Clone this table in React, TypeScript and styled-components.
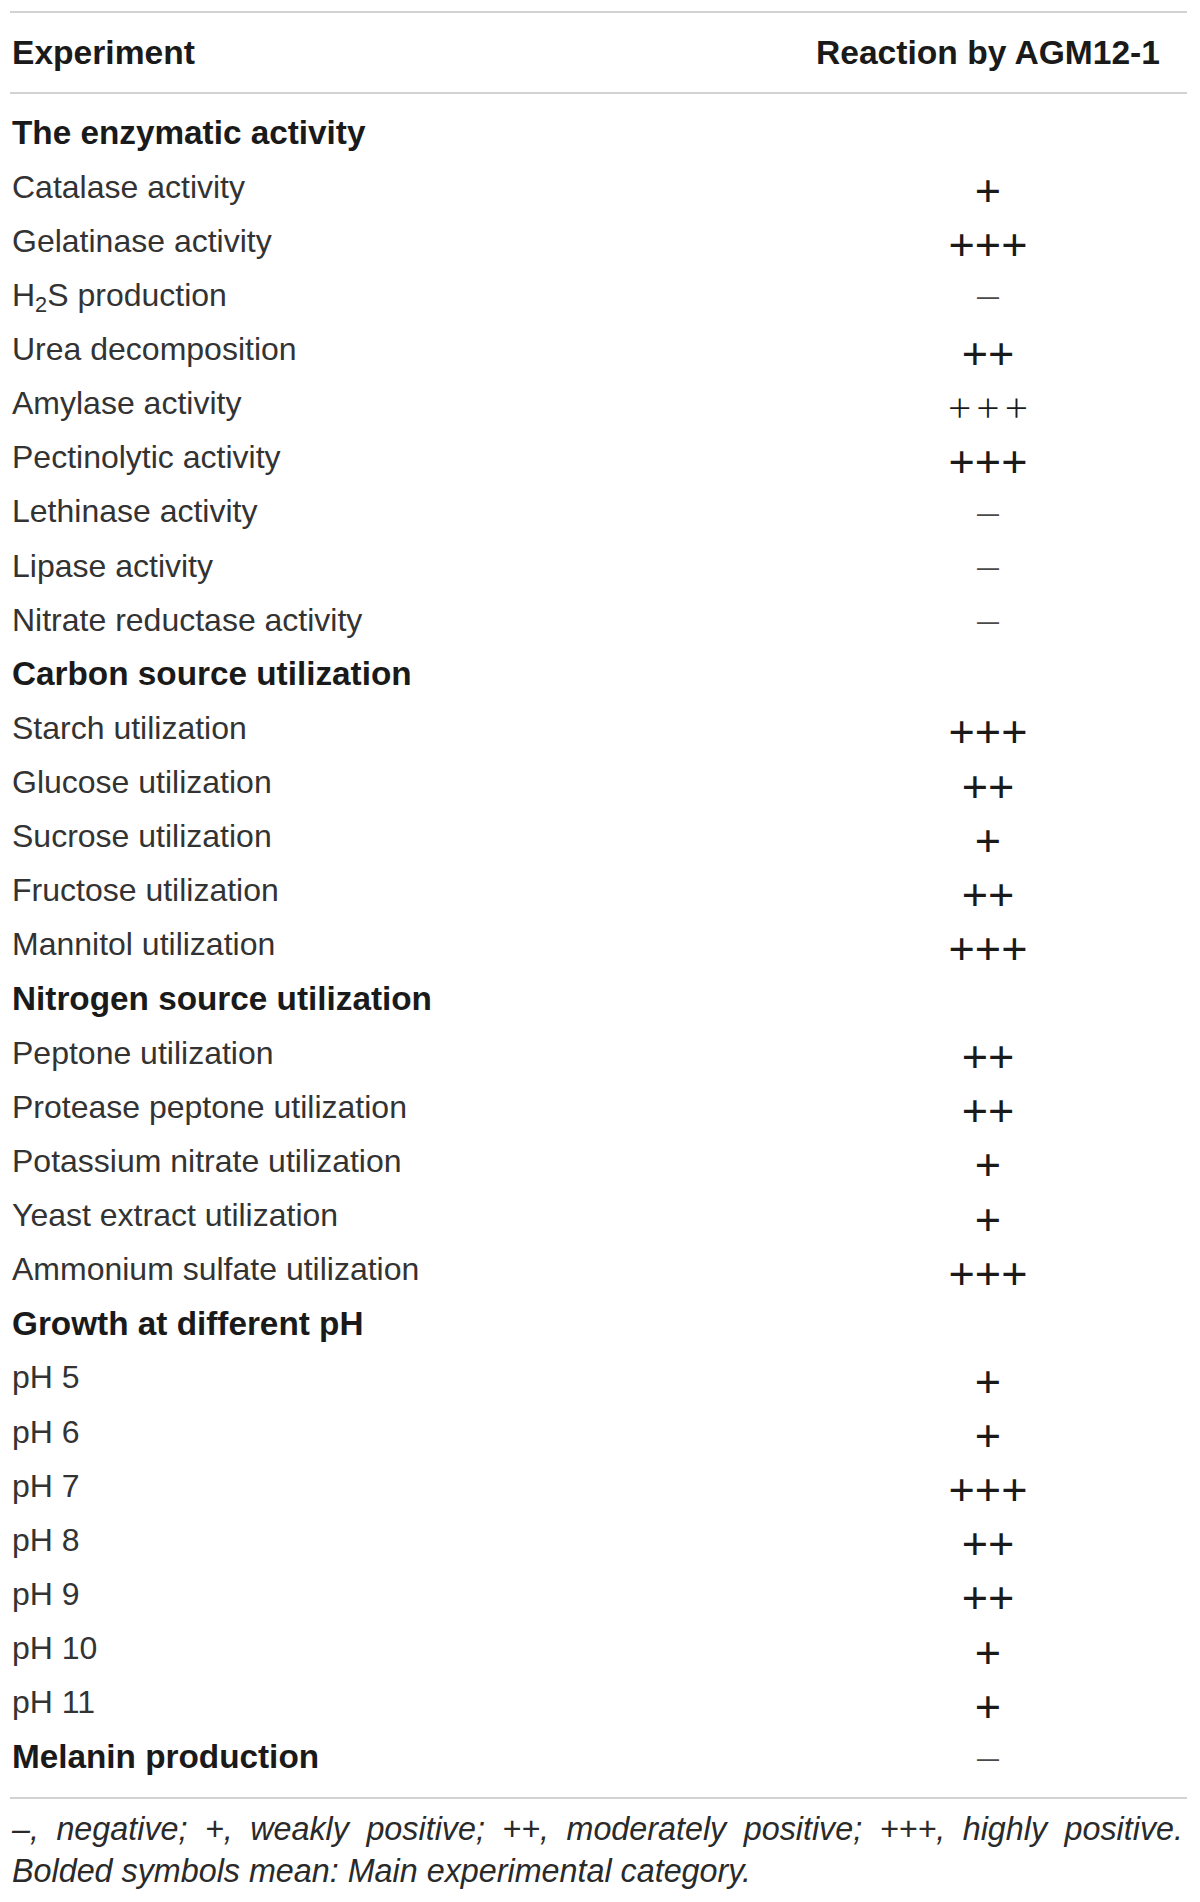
import styled, { createGlobalStyle } from "styled-components";

type Level = "bold" | "thin" | "neg";

type RowI = {
  label: string;
  category?: boolean;
  value?: string;
  level?: Level;
};

const rows: RowI[] = [
  { label: "The enzymatic activity", category: true },
  { label: "Catalase activity", value: "+", level: "bold" },
  { label: "Gelatinase activity", value: "+++", level: "bold" },
  { label: "H2S production", value: "–", level: "neg" },
  { label: "Urea decomposition", value: "++", level: "bold" },
  { label: "Amylase activity", value: "+++", level: "thin" },
  { label: "Pectinolytic activity", value: "+++", level: "bold" },
  { label: "Lethinase activity", value: "–", level: "neg" },
  { label: "Lipase activity", value: "–", level: "neg" },
  { label: "Nitrate reductase activity", value: "–", level: "neg" },
  { label: "Carbon source utilization", category: true },
  { label: "Starch utilization", value: "+++", level: "bold" },
  { label: "Glucose utilization", value: "++", level: "bold" },
  { label: "Sucrose utilization", value: "+", level: "bold" },
  { label: "Fructose utilization", value: "++", level: "bold" },
  { label: "Mannitol utilization", value: "+++", level: "bold" },
  { label: "Nitrogen source utilization", category: true },
  { label: "Peptone utilization", value: "++", level: "bold" },
  { label: "Protease peptone utilization", value: "++", level: "bold" },
  { label: "Potassium nitrate utilization", value: "+", level: "bold" },
  { label: "Yeast extract utilization", value: "+", level: "bold" },
  { label: "Ammonium sulfate utilization", value: "+++", level: "bold" },
  { label: "Growth at different pH", category: true },
  { label: "pH 5", value: "+", level: "bold" },
  { label: "pH 6", value: "+", level: "bold" },
  { label: "pH 7", value: "+++", level: "bold" },
  { label: "pH 8", value: "++", level: "bold" },
  { label: "pH 9", value: "++", level: "bold" },
  { label: "pH 10", value: "+", level: "bold" },
  { label: "pH 11", value: "+", level: "bold" },
  { label: "Melanin production", category: true, value: "–", level: "neg" },
];

// chemical formulas like H2S get the digit as a subscript
const renderLabel = (label: string) => {
  const m = label.match(/^([A-Z][a-z]?)(\d)(\S*)(.*)$/);
  if (!m) return label;
  return (
    <>
      {m[1]}
      <Sub>{m[2]}</Sub>
      {m[3]}
      {m[4]}
    </>
  );
};

const App = () => {
  return (
    <>
      <GlobalStyle />
      <Page>
        <Table>
          <HeadRow>
            <HeadCell>Experiment</HeadCell>
            <HeadCell $center>Reaction by AGM12-1</HeadCell>
          </HeadRow>
          <Body>
            {rows.map((row, i) => (
              <Row key={i}>
                <Label $category={row.category}>{renderLabel(row.label)}</Label>
                {row.value && <Reaction $level={row.level}>{row.value}</Reaction>}
              </Row>
            ))}
          </Body>
        </Table>
        <Footnote>
          <FootLine $justify>
            –, negative; +, weakly positive; ++, moderately positive; +++, highly positive.
          </FootLine>
          <FootLine>Bolded symbols mean: Main experimental category.</FootLine>
        </Footnote>
      </Page>
    </>
  );
};

const GlobalStyle = createGlobalStyle`
  body {
    margin: 0;
    background: #fff;
    font-family: "Liberation Sans", Arial, sans-serif;
    color: #222;
  }
`;

const Page = styled.div`
  width: 1177px;
  padding: 11px 0 0 10px;
`;

const Table = styled.div`
  border-top: 2px solid #d2d2d2;
  border-bottom: 2px solid #d2d2d2;
`;

const HeadRow = styled.div`
  display: grid;
  grid-template-columns: 1fr 398px;
  align-items: center;
  height: 79px;
  border-bottom: 2px solid #d2d2d2;
`;

const HeadCell = styled.div<{ $center?: boolean }>`
  font-size: 33.6px;
  font-weight: 700;
  color: #1a1a1a;
  padding-left: ${(p) => (p.$center ? "0" : "2px")};
  text-align: ${(p) => (p.$center ? "center" : "left")};
`;

const Body = styled.div`
  padding: 12px 0 13px;
`;

const Row = styled.div`
  display: grid;
  grid-template-columns: 1fr 398px;
  align-items: center;
  height: 54.13px;
`;

const Label = styled.div<{ $category?: boolean }>`
  padding-left: 2px;
  white-space: nowrap;
  font-size: ${(p) => (p.$category ? "33.3px" : "32px")};
  font-weight: ${(p) => (p.$category ? 700 : 400)};
  color: ${(p) => (p.$category ? "#1a1a1a" : "#333")};
`;

const Sub = styled.sub`
  font-size: 0.68em;
  vertical-align: -0.28em;
  line-height: 0;
`;

const Reaction = styled.div<{ $level?: Level }>`
  grid-column: 2;
  text-align: center;
  line-height: 1;
  padding-top: ${(p) => (p.$level === "bold" ? "7px" : "2px")};
  font-family: ${(p) =>
    p.$level === "bold" ? `"Liberation Sans", Arial, sans-serif` : `Inter, "DejaVu Sans", sans-serif`};
  font-size: ${(p) => (p.$level === "bold" ? "45px" : "44px")};
  font-weight: ${(p) => (p.$level === "bold" ? 400 : 200)};
  color: ${(p) => (p.$level === "neg" ? "#4a4a4a" : "#1a1a1a")};
`;

const Footnote = styled.div`
  padding-top: 9px;
  font-size: 32.3px;
  font-style: italic;
  line-height: 42px;
  color: #2a2a2a;
`;

const FootLine = styled.div<{ $justify?: boolean }>`
  text-align: ${(p) => (p.$justify ? "justify" : "left")};
  text-align-last: ${(p) => (p.$justify ? "justify" : "auto")};
  padding: 0 4px 0 2px;
`;

export default App;
